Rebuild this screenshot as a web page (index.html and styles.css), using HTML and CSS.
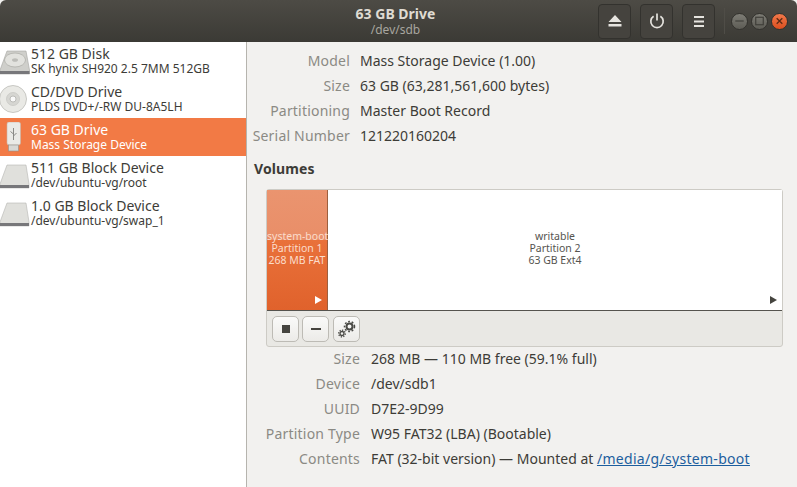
FILE: index.html
```html
<!DOCTYPE html>
<html lang="en">

<head>
  <meta charset="UTF-8">
  <meta name="viewport" content="width=device-width, initial-scale=1.0">
  <title>63 GB Drive</title>
  <link rel="stylesheet" href="styles.css">
</head>

<body>
  <header class="titlebar">
    <div class="title">
      <div class="title-main">63 GB Drive</div>
      <div class="title-sub">/dev/sdb</div>
    </div>
    <div class="head-actions">
      <button class="head-btn" aria-label="Eject">
        <svg width="14" height="12" viewBox="0 0 14 12"><path d="M7 0 L13.5 7 H0.5 Z M0.5 9 H13.5 V11.5 H0.5 Z" fill="#e6e4df"/></svg>
      </button>
      <button class="head-btn" aria-label="Power">
        <svg width="16" height="16" viewBox="0 0 16 16"><path d="M4.6 3.2 A6.2 6.2 0 1 0 11.4 3.2 M8 0.5 V7.5" fill="none" stroke="#e6e4df" stroke-width="1.7"/></svg>
      </button>
      <button class="head-btn" aria-label="Menu">
        <svg width="10" height="11" viewBox="0 0 10 11"><path d="M0 0 H10 V2 H0 Z M0 4.5 H10 V6.5 H0 Z M0 9 H10 V11 H0 Z" fill="#e6e4df"/></svg>
      </button>
    </div>
    <div class="head-sep"></div>
    <div class="win-buttons">
      <span class="win-btn"><svg width="16" height="16" viewBox="0 0 16 16"><path d="M3.5 8 H12.5" stroke="#3e3d38" stroke-width="1.2"/></svg></span>
      <span class="win-btn"><svg width="16" height="16" viewBox="0 0 16 16"><rect x="4" y="4" width="8" height="8" fill="none" stroke="#3e3d38" stroke-width="1.2"/></svg></span>
      <span class="win-btn win-close"><svg width="16" height="16" viewBox="0 0 16 16"><path d="M5 5 L11 11 M11 5 L5 11" stroke="#5c2a14" stroke-width="1.4"/></svg></span>
    </div>
  </header>

  <main class="content">
    <aside class="sidebar">
      <div class="device">
        <svg class="device-icon" width="30" height="30" viewBox="0 0 30 30">
          <path d="M7 5 H26 L29.5 24 V28 H0 V24 Z" fill="#cfcfcb" stroke="#a5a5a1" stroke-width="0.6"/>
          <ellipse cx="15" cy="14" rx="10.5" ry="7" fill="#e2e2de" stroke="#aeaeaa" stroke-width="0.8"/>
          <ellipse cx="15" cy="14" rx="3" ry="1.8" fill="#bcbcb8"/>
          <rect x="0" y="25" width="29.5" height="3" fill="#77777a"/>
        </svg>
        <div class="device-text">
          <div class="device-name">512 GB Disk</div>
          <div class="device-desc">SK hynix SH920 2.5 7MM 512GB</div>
        </div>
      </div>
      <div class="device">
        <svg class="device-icon" width="30" height="30" viewBox="0 0 30 30">
          <circle cx="13" cy="15" r="13.5" fill="#e9e9e5" stroke="#bcbcb8" stroke-width="0.8"/>
          <circle cx="13" cy="15" r="6.5" fill="#d6d6d2" stroke="#c8c8c4" stroke-width="0.8"/>
          <circle cx="13" cy="15" r="3" fill="#fafafa" stroke="#b0b0ac" stroke-width="0.8"/>
        </svg>
        <div class="device-text">
          <div class="device-name">CD/DVD Drive</div>
          <div class="device-desc">PLDS DVD+/-RW DU-8A5LH</div>
        </div>
      </div>
      <div class="device device-selected">
        <svg class="device-icon" width="30" height="30" viewBox="0 0 30 30">
          <rect x="7" y="0" width="13.5" height="23" rx="2" fill="#eaeae6" stroke="#c9b5a8" stroke-width="0.6"/>
          <rect x="8.5" y="23" width="10" height="6" fill="#d8d8d4" stroke="#8f8f8b" stroke-width="0.6"/>
          <path d="M13.5 6 V18 M13.5 12 L10.5 9.5 M13.5 14 L16.5 11" stroke="#8a8a86" fill="none"/>
        </svg>
        <div class="device-text">
          <div class="device-name">63 GB Drive</div>
          <div class="device-desc">Mass Storage Device</div>
        </div>
      </div>
      <div class="device">
        <svg class="device-icon" width="30" height="30" viewBox="0 0 30 30">
          <path d="M7 5 H26 L29 24 V28 H0 V24 Z" fill="#e0e0dc" stroke="#b5b5b1" stroke-width="0.6"/>
          <rect x="0" y="25" width="29" height="3" fill="#77777a"/>
        </svg>
        <div class="device-text">
          <div class="device-name">511 GB Block Device</div>
          <div class="device-desc">/dev/ubuntu-vg/root</div>
        </div>
      </div>
      <div class="device">
        <svg class="device-icon" width="30" height="30" viewBox="0 0 30 30">
          <path d="M7 5 H26 L29 24 V28 H0 V24 Z" fill="#e0e0dc" stroke="#b5b5b1" stroke-width="0.6"/>
          <rect x="0" y="25" width="29" height="3" fill="#77777a"/>
        </svg>
        <div class="device-text">
          <div class="device-name">1.0 GB Block Device</div>
          <div class="device-desc">/dev/ubuntu-vg/swap_1</div>
        </div>
      </div>
    </aside>

    <section class="details">
      <div class="props props-drive">
        <div class="prop-label">Model</div><div class="prop-value">Mass Storage Device (1.00)</div>
        <div class="prop-label">Size</div><div class="prop-value">63 GB (63,281,561,600 bytes)</div>
        <div class="prop-label">Partitioning</div><div class="prop-value">Master Boot Record</div>
        <div class="prop-label">Serial Number</div><div class="prop-value">121220160204</div>
      </div>

      <h3 class="volumes-title">Volumes</h3>

      <div class="volumes">
        <div class="partitions">
          <div class="part part-selected">
            <div>system-boot</div>
            <div>Partition 1</div>
            <div>268 MB FAT</div>
            <span class="part-arrow"></span>
          </div>
          <div class="part part-main">
            <div>writable</div>
            <div>Partition 2</div>
            <div>63 GB Ext4</div>
            <span class="part-arrow"></span>
          </div>
        </div>
        <div class="vol-toolbar">
          <button class="vol-btn" aria-label="Stop"><span class="icon-stop"></span></button>
          <button class="vol-btn" aria-label="Remove"><span class="icon-minus"></span></button>
          <button class="vol-btn vol-btn-gear" aria-label="Settings">
            <svg width="20" height="20" viewBox="0 0 20 20" fill="none" stroke="#4a4a46">
              <circle cx="12.5" cy="7.5" r="3" stroke-width="2"/>
              <circle cx="12.5" cy="7.5" r="5" stroke-width="1.5" stroke-dasharray="1.8 1.8"/>
              <circle cx="5" cy="14.5" r="2" stroke-width="1.3"/>
              <circle cx="5" cy="14.5" r="3.4" stroke-width="1.2" stroke-dasharray="1.3 1.3"/>
            </svg>
          </button>
        </div>
      </div>

      <div class="props props-part">
        <div class="prop-label">Size</div><div class="prop-value">268 MB — 110 MB free (59.1% full)</div>
        <div class="prop-label">Device</div><div class="prop-value">/dev/sdb1</div>
        <div class="prop-label">UUID</div><div class="prop-value">D7E2-9D99</div>
        <div class="prop-label">Partition Type</div><div class="prop-value">W95 FAT32 (LBA) (Bootable)</div>
        <div class="prop-label">Contents</div><div class="prop-value">FAT (32-bit version) — Mounted at <a href="#" class="mount-link">/media/g/system-boot</a></div>
      </div>
    </section>
  </main>
</body>

</html>
```

FILE: styles.css
```css
html, body {
  height: 100%;
}

body {
  margin: 0;
  display: flex;
  flex-direction: column;
  overflow: hidden;
  background: #f2f1ef;
  color: #3d3c37;
  font-family: "Noto Sans", sans-serif;
  font-size: 14px;
}

.titlebar {
  height: 42px;
  flex: none;
  position: relative;
  display: flex;
  align-items: center;
  justify-content: flex-end;
  padding-right: 9px;
  box-sizing: border-box;
  background: linear-gradient(#4d4b45, #3b3a35);
  border-radius: 6px 6px 0 0;
}

.title {
  position: absolute;
  left: 0;
  right: 6px;
  top: 5px;
  text-align: center;
  pointer-events: none;
}

.title-main {
  color: #dfdbd2;
  font-size: 14px;
  font-weight: 700;
  line-height: 17px;
}

.title-sub {
  color: #a8a69f;
  font-size: 12px;
  line-height: 15px;
}

.head-actions {
  display: flex;
  gap: 9px;
}

.head-btn {
  width: 33px;
  height: 35px;
  padding: 0;
  display: flex;
  align-items: center;
  justify-content: center;
  background: #45433e;
  border: 1px solid #33322e;
  border-radius: 4px;
}

.head-sep {
  width: 1px;
  height: 26px;
  margin: 0 6px 0 9px;
  background: #4f4d47;
}

.win-buttons {
  display: flex;
  gap: 3px;
}

.win-btn {
  width: 17px;
  height: 17px;
  box-sizing: border-box;
  display: flex;
  align-items: center;
  justify-content: center;
  border-radius: 50%;
  background: linear-gradient(#7d7c75, #5d5c55);
  border: 0.5px solid #33322e;
}

.win-close {
  background: linear-gradient(#f0784a, #dd4f1f);
}

.content {
  flex: 1;
  display: flex;
  min-height: 0;
}

.sidebar {
  width: 246px;
  flex: none;
  background: #fff;
  border-right: 1px solid #b6b4ae;
}

.device {
  height: 38px;
  display: flex;
  align-items: center;
  gap: 1px;
}

.device-icon {
  flex: none;
}

.device-text {
  line-height: 15px;
}

.device-name {
  font-size: 14px;
}

.device-desc {
  font-size: 12px;
}

.device-selected {
  background: #f27a45;
  color: #fff;
}

.details {
  flex: 1;
  padding: 0 14px 0 7px;
  min-width: 0;
}

.props {
  display: grid;
  grid-auto-rows: 25px;
  align-items: center;
}

.props-drive {
  grid-template-columns: 98px 1fr;
  column-gap: 10px;
  margin: 6px 0 0 -2px;
}

.props-part {
  grid-template-columns: 106px 1fr;
  column-gap: 11px;
  margin-top: -1px;
}

.prop-label {
  color: #8b8a84;
  text-align: right;
  white-space: nowrap;
  letter-spacing: 0.2px;
}

.mount-link {
  color: #1c5e9e;
  letter-spacing: 0.3px;
}

.volumes-title {
  margin: 12px 0 11px;
  font-size: 14px;
  line-height: 18px;
  font-weight: 700;
  letter-spacing: 0.1px;
}

.volumes {
  margin-left: 12px;
  border: 1px solid #cdcbc5;
  border-radius: 3px;
  background: #e9e8e4;
}

.partitions {
  height: 120px;
  display: flex;
  border-bottom: 1px solid #55534e;
  background: #fff;
  font-size: 10.5px;
  line-height: 12px;
}

.part {
  position: relative;
  display: flex;
  flex-direction: column;
  justify-content: center;
  padding-bottom: 4px;
  box-sizing: border-box;
  text-align: center;
  white-space: nowrap;
}

.part-selected {
  width: 61px;
  flex: none;
  color: #fbdccb;
  border-right: 1px solid #9c5f3e;
  background: linear-gradient(#ea946f 0, #e98e68 42%, #e9713a 42%, #e0622c 100%);
}

.part-main {
  flex: 1;
  color: #55544f;
}

.part-arrow {
  position: absolute;
  right: 5px;
  bottom: 6px;
  width: 0;
  height: 0;
  border-left: 7px solid #45443f;
  border-top: 4px solid transparent;
  border-bottom: 4px solid transparent;
}

.part-selected .part-arrow {
  border-left-color: #fff;
}

.vol-toolbar {
  height: 35px;
  display: flex;
  align-items: center;
  gap: 3px;
  padding-left: 5px;
}

.vol-btn {
  width: 27px;
  height: 26px;
  padding: 0;
  display: flex;
  align-items: center;
  justify-content: center;
  background: linear-gradient(#fafaf9, #ecebe8);
  border: 1px solid #bdbbb5;
  border-radius: 5px;
}

.vol-btn-gear {
  margin-left: 1px;
}

.icon-stop {
  width: 8px;
  height: 8px;
  background: #45443f;
}

.icon-minus {
  width: 10px;
  height: 2px;
  background: #45443f;
}
```
